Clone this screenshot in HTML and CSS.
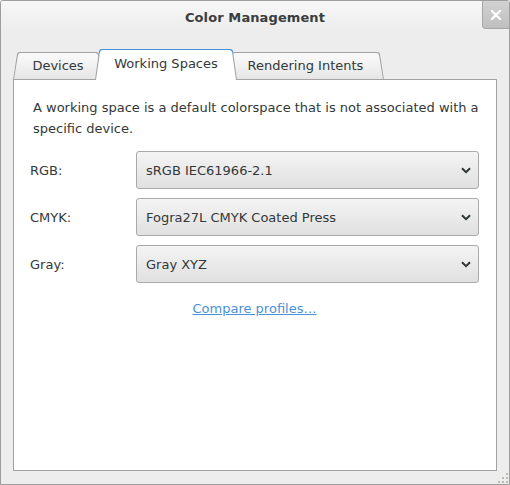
FILE: index.html
```html
<!DOCTYPE html>
<html>
<head>
<meta charset="utf-8">
<title>Color Management</title>
<link rel="stylesheet" href="styles.css">
</head>
<body>
<div class="window">
  <header class="titlebar">
    <span class="titlebar-start"></span>
    <h1 class="title">Color Management</h1>
    <div class="titlebar-end">
      <button class="close" aria-label="Close">
        <svg width="10" height="10" viewBox="0 0 10 10"><path d="M1 1 L9 9 M9 1 L1 9" stroke="#ffffff" stroke-width="2.4" stroke-linecap="square" fill="none"/></svg>
      </button>
    </div>
  </header>
  <main class="notebook">
    <div class="tabs">
      <div class="tab tab-devices"><span class="tab-label">Devices</span></div>
      <div class="tab tab-active tab-working"><span class="tab-label">Working Spaces</span></div>
      <div class="tab tab-rendering"><span class="tab-label">Rendering Intents</span></div>
    </div>
    <section class="panel">
      <p class="desc">A working space is a default colorspace that is not associated with a specific device.</p>
      <div class="form">
        <span class="label">RGB:</span>
        <div class="combo"><span class="combo-text">sRGB IEC61966-2.1</span><svg class="chevron" width="10" height="7" viewBox="0 0 10 7"><path d="M1 1.2 L5 5.2 L9 1.2" stroke="#2e3436" stroke-width="2" fill="none"/></svg></div>
        <span class="label">CMYK:</span>
        <div class="combo"><span class="combo-text">Fogra27L CMYK Coated Press</span><svg class="chevron" width="10" height="7" viewBox="0 0 10 7"><path d="M1 1.2 L5 5.2 L9 1.2" stroke="#2e3436" stroke-width="2" fill="none"/></svg></div>
        <span class="label">Gray:</span>
        <div class="combo"><span class="combo-text">Gray XYZ</span><svg class="chevron" width="10" height="7" viewBox="0 0 10 7"><path d="M1 1.2 L5 5.2 L9 1.2" stroke="#2e3436" stroke-width="2" fill="none"/></svg></div>
      </div>
      <div class="link-row"><a class="link" href="#">Compare profiles…</a></div>
    </section>
  </main>
  <footer class="grip-row">
    <svg class="grip" width="12" height="12" viewBox="0 0 12 12">
      <rect x="9" y="1" width="2" height="2" fill="#b7beb0"/>
      <rect x="5" y="5" width="2" height="2" fill="#b7beb0"/>
      <rect x="9" y="5" width="2" height="2" fill="#b7beb0"/>
      <rect x="1" y="9" width="2" height="2" fill="#b7beb0"/>
      <rect x="5" y="9" width="2" height="2" fill="#b7beb0"/>
      <rect x="9" y="9" width="2" height="2" fill="#b7beb0"/>
    </svg>
  </footer>
</div>
</body>
</html>
```
FILE: styles.css
```css
* { box-sizing: border-box; }
html, body { margin: 0; padding: 0; }
body {
  width: 510px;
  height: 485px;
  font-family: "DejaVu Sans", "Liberation Sans", sans-serif;
  font-size: 13px;
  color: #333839;
  background: #ededed;
}
.window {
  width: 510px;
  height: 485px;
  border: 1px solid #9d9d9d;
  border-radius: 3px 3px 0 0;
  background: #ededed;
  display: flex;
  flex-direction: column;
  overflow: hidden;
}
.titlebar {
  height: 30px;
  flex: none;
  display: grid;
  grid-template-columns: 1fr auto 1fr;
  align-items: start;
  background: linear-gradient(#f7f7f7, #ededed);
}
.title {
  margin: 0;
  padding-top: 2px;
  font-size: 13px;
  font-weight: bold;
  line-height: 30px;
  color: #3a3d3e;
  letter-spacing: 0.1px;
}
.titlebar-end {
  display: flex;
  justify-content: flex-end;
}
.close {
  width: 27px;
  height: 28px;
  margin: 0;
  padding: 0;
  border: none;
  border-left: 1px solid #a7a7a7;
  border-bottom: 1px solid #a7a7a7;
  border-bottom-left-radius: 4px;
  background: linear-gradient(#d2d2d2, #bfbfbf);
  display: flex;
  align-items: center;
  justify-content: center;
}
.close svg { display: block; }
.notebook {
  flex: 1;
  margin: 18px 12px 0 12px;
  display: flex;
  flex-direction: column;
  min-height: 0;
}
.tabs {
  height: 31px;
  flex: none;
  display: flex;
  align-items: flex-end;
  margin-bottom: -1px;
  position: relative;
  z-index: 1;
}
.tab {
  position: relative;
  height: 28px;
  display: flex;
  align-items: center;
  justify-content: center;
  padding-bottom: 1px;
}
.tab::before,
.tab::after {
  content: "";
  position: absolute;
  clip-path: polygon(4px 2px, 5px 0.6px, 6.5px 0, calc(100% - 6.5px) 0, calc(100% - 5px) 0.6px, calc(100% - 4px) 2px, 100% 100%, 0 100%);
}
.tab::before {
  inset: 0;
  background: #a3a3a3;
}
.tab::after {
  top: 1px;
  left: 1px;
  right: 1px;
  bottom: 1px;
  background: linear-gradient(#fbfbfb, #e6e6e6);
}
.tab-label {
  position: relative;
  z-index: 1;
  line-height: 16px;
}
.tab-devices {
  width: 90px;
  z-index: 1;
}
.tab-working {
  width: 142px;
  margin-left: -8px;
}
.tab-rendering {
  width: 157px;
  margin-left: -10px;
  z-index: 1;
}
.tab-active {
  height: 31px;
  z-index: 3;
  padding-bottom: 1px;
}
.tab-active::before {
  background: linear-gradient(#4a90d9 0, #4a90d9 2px, #8fb0d6 5px, #a3a3a3 9px);
}
.tab-active::after {
  bottom: 0;
  background: #ffffff;
}
.panel {
  flex: 1;
  border: 1px solid #a1a1a1;
  background: #ffffff;
  padding: 17px 17px 0 16px;
}
.desc {
  margin: 0 -10px 0 3px;
  line-height: 21px;
}
.form {
  margin-top: 12px;
  display: grid;
  grid-template-columns: 106px 1fr;
  row-gap: 9px;
  align-items: center;
}
.label {
  line-height: 16px;
  padding-top: 1px;
}
.combo {
  height: 38px;
  border: 1px solid #a9a9a9;
  border-radius: 3px;
  background: linear-gradient(#f4f4f4, #e0e0e0);
  padding: 0 7px 0 9px;
  display: flex;
  align-items: center;
  justify-content: space-between;
}
.combo-text {
  padding-top: 1px;
}
.chevron { display: block; }
.link-row {
  margin-top: 15px;
  text-align: center;
  line-height: 21px;
}
.link {
  color: #4a90d9;
  text-decoration: underline;
}
.grip-row {
  height: 13px;
  flex: none;
  display: flex;
  justify-content: flex-end;
  align-items: flex-end;
}
.grip { display: block; }
```
